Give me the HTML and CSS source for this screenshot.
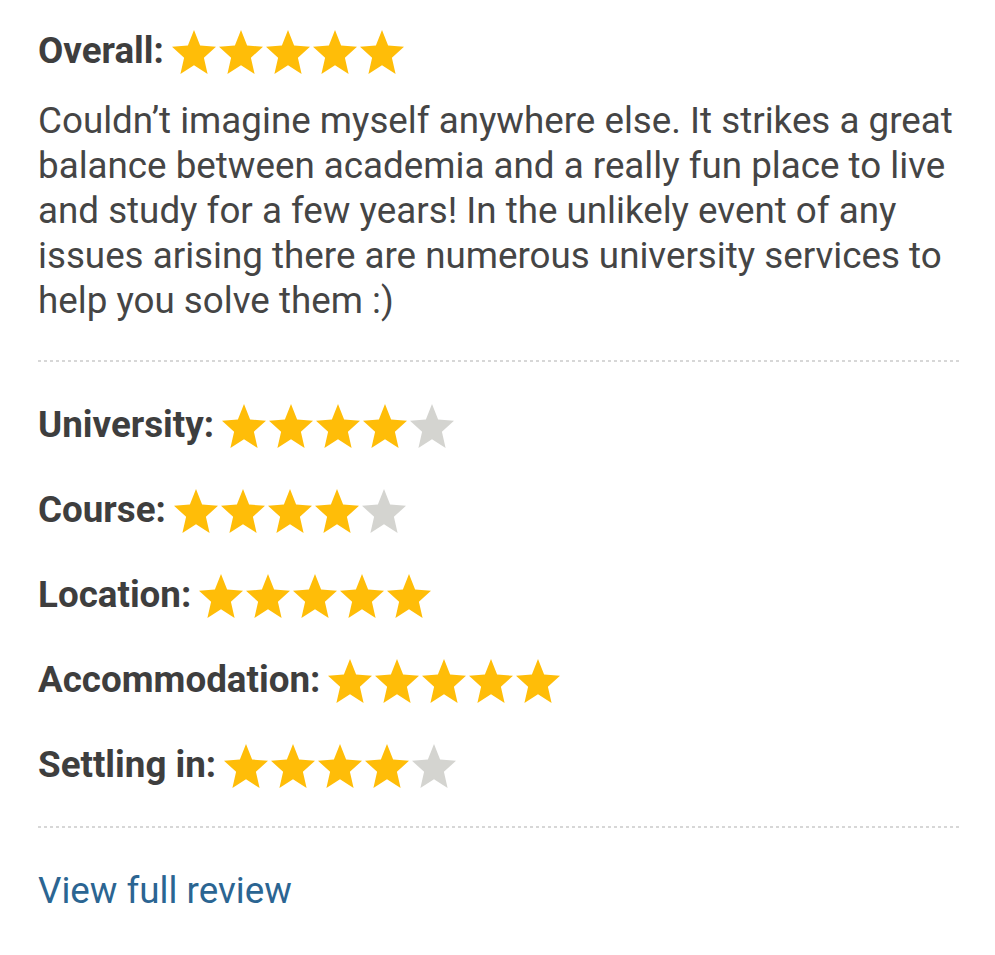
FILE: index.html
```html
<!DOCTYPE html>
<html lang="en">
<head>
<meta charset="utf-8">
<title>Review</title>
<link rel="stylesheet" href="styles.css">
</head>
<body>
<main class="review">
  <div class="rating-row overall">
    <span class="label">Overall:</span>
    <span class="stars">
      <svg class="star on" viewBox="2.45 0 95.1 90.45" preserveAspectRatio="none"><polygon points="50,0 63.23,31.8 97.55,34.55 71.4,56.95 79.39,90.45 50,72.5 20.61,90.45 28.6,56.95 2.45,34.55 36.77,31.8"/></svg><svg class="star on" viewBox="2.45 0 95.1 90.45" preserveAspectRatio="none"><polygon points="50,0 63.23,31.8 97.55,34.55 71.4,56.95 79.39,90.45 50,72.5 20.61,90.45 28.6,56.95 2.45,34.55 36.77,31.8"/></svg><svg class="star on" viewBox="2.45 0 95.1 90.45" preserveAspectRatio="none"><polygon points="50,0 63.23,31.8 97.55,34.55 71.4,56.95 79.39,90.45 50,72.5 20.61,90.45 28.6,56.95 2.45,34.55 36.77,31.8"/></svg><svg class="star on" viewBox="2.45 0 95.1 90.45" preserveAspectRatio="none"><polygon points="50,0 63.23,31.8 97.55,34.55 71.4,56.95 79.39,90.45 50,72.5 20.61,90.45 28.6,56.95 2.45,34.55 36.77,31.8"/></svg><svg class="star on" viewBox="2.45 0 95.1 90.45" preserveAspectRatio="none"><polygon points="50,0 63.23,31.8 97.55,34.55 71.4,56.95 79.39,90.45 50,72.5 20.61,90.45 28.6,56.95 2.45,34.55 36.77,31.8"/></svg>
    </span>
  </div>
  <p class="body-text">Couldn’t imagine myself anywhere else. It strikes a great balance between academia and a really fun place to live and study for a few years! In the unlikely event of any issues arising there are numerous university services to help you solve them :)</p>
  <div class="divider"></div>
  <div class="ratings">
    <div class="rating-row">
      <span class="label">University:</span>
      <span class="stars"><svg class="star on" viewBox="2.45 0 95.1 90.45" preserveAspectRatio="none"><polygon points="50,0 63.23,31.8 97.55,34.55 71.4,56.95 79.39,90.45 50,72.5 20.61,90.45 28.6,56.95 2.45,34.55 36.77,31.8"/></svg><svg class="star on" viewBox="2.45 0 95.1 90.45" preserveAspectRatio="none"><polygon points="50,0 63.23,31.8 97.55,34.55 71.4,56.95 79.39,90.45 50,72.5 20.61,90.45 28.6,56.95 2.45,34.55 36.77,31.8"/></svg><svg class="star on" viewBox="2.45 0 95.1 90.45" preserveAspectRatio="none"><polygon points="50,0 63.23,31.8 97.55,34.55 71.4,56.95 79.39,90.45 50,72.5 20.61,90.45 28.6,56.95 2.45,34.55 36.77,31.8"/></svg><svg class="star on" viewBox="2.45 0 95.1 90.45" preserveAspectRatio="none"><polygon points="50,0 63.23,31.8 97.55,34.55 71.4,56.95 79.39,90.45 50,72.5 20.61,90.45 28.6,56.95 2.45,34.55 36.77,31.8"/></svg><svg class="star off" viewBox="2.45 0 95.1 90.45" preserveAspectRatio="none"><polygon points="50,0 63.23,31.8 97.55,34.55 71.4,56.95 79.39,90.45 50,72.5 20.61,90.45 28.6,56.95 2.45,34.55 36.77,31.8"/></svg></span>
    </div>
    <div class="rating-row">
      <span class="label">Course:</span>
      <span class="stars"><svg class="star on" viewBox="2.45 0 95.1 90.45" preserveAspectRatio="none"><polygon points="50,0 63.23,31.8 97.55,34.55 71.4,56.95 79.39,90.45 50,72.5 20.61,90.45 28.6,56.95 2.45,34.55 36.77,31.8"/></svg><svg class="star on" viewBox="2.45 0 95.1 90.45" preserveAspectRatio="none"><polygon points="50,0 63.23,31.8 97.55,34.55 71.4,56.95 79.39,90.45 50,72.5 20.61,90.45 28.6,56.95 2.45,34.55 36.77,31.8"/></svg><svg class="star on" viewBox="2.45 0 95.1 90.45" preserveAspectRatio="none"><polygon points="50,0 63.23,31.8 97.55,34.55 71.4,56.95 79.39,90.45 50,72.5 20.61,90.45 28.6,56.95 2.45,34.55 36.77,31.8"/></svg><svg class="star on" viewBox="2.45 0 95.1 90.45" preserveAspectRatio="none"><polygon points="50,0 63.23,31.8 97.55,34.55 71.4,56.95 79.39,90.45 50,72.5 20.61,90.45 28.6,56.95 2.45,34.55 36.77,31.8"/></svg><svg class="star off" viewBox="2.45 0 95.1 90.45" preserveAspectRatio="none"><polygon points="50,0 63.23,31.8 97.55,34.55 71.4,56.95 79.39,90.45 50,72.5 20.61,90.45 28.6,56.95 2.45,34.55 36.77,31.8"/></svg></span>
    </div>
    <div class="rating-row">
      <span class="label">Location:</span>
      <span class="stars"><svg class="star on" viewBox="2.45 0 95.1 90.45" preserveAspectRatio="none"><polygon points="50,0 63.23,31.8 97.55,34.55 71.4,56.95 79.39,90.45 50,72.5 20.61,90.45 28.6,56.95 2.45,34.55 36.77,31.8"/></svg><svg class="star on" viewBox="2.45 0 95.1 90.45" preserveAspectRatio="none"><polygon points="50,0 63.23,31.8 97.55,34.55 71.4,56.95 79.39,90.45 50,72.5 20.61,90.45 28.6,56.95 2.45,34.55 36.77,31.8"/></svg><svg class="star on" viewBox="2.45 0 95.1 90.45" preserveAspectRatio="none"><polygon points="50,0 63.23,31.8 97.55,34.55 71.4,56.95 79.39,90.45 50,72.5 20.61,90.45 28.6,56.95 2.45,34.55 36.77,31.8"/></svg><svg class="star on" viewBox="2.45 0 95.1 90.45" preserveAspectRatio="none"><polygon points="50,0 63.23,31.8 97.55,34.55 71.4,56.95 79.39,90.45 50,72.5 20.61,90.45 28.6,56.95 2.45,34.55 36.77,31.8"/></svg><svg class="star on" viewBox="2.45 0 95.1 90.45" preserveAspectRatio="none"><polygon points="50,0 63.23,31.8 97.55,34.55 71.4,56.95 79.39,90.45 50,72.5 20.61,90.45 28.6,56.95 2.45,34.55 36.77,31.8"/></svg></span>
    </div>
    <div class="rating-row">
      <span class="label">Accommodation:</span>
      <span class="stars"><svg class="star on" viewBox="2.45 0 95.1 90.45" preserveAspectRatio="none"><polygon points="50,0 63.23,31.8 97.55,34.55 71.4,56.95 79.39,90.45 50,72.5 20.61,90.45 28.6,56.95 2.45,34.55 36.77,31.8"/></svg><svg class="star on" viewBox="2.45 0 95.1 90.45" preserveAspectRatio="none"><polygon points="50,0 63.23,31.8 97.55,34.55 71.4,56.95 79.39,90.45 50,72.5 20.61,90.45 28.6,56.95 2.45,34.55 36.77,31.8"/></svg><svg class="star on" viewBox="2.45 0 95.1 90.45" preserveAspectRatio="none"><polygon points="50,0 63.23,31.8 97.55,34.55 71.4,56.95 79.39,90.45 50,72.5 20.61,90.45 28.6,56.95 2.45,34.55 36.77,31.8"/></svg><svg class="star on" viewBox="2.45 0 95.1 90.45" preserveAspectRatio="none"><polygon points="50,0 63.23,31.8 97.55,34.55 71.4,56.95 79.39,90.45 50,72.5 20.61,90.45 28.6,56.95 2.45,34.55 36.77,31.8"/></svg><svg class="star on" viewBox="2.45 0 95.1 90.45" preserveAspectRatio="none"><polygon points="50,0 63.23,31.8 97.55,34.55 71.4,56.95 79.39,90.45 50,72.5 20.61,90.45 28.6,56.95 2.45,34.55 36.77,31.8"/></svg></span>
    </div>
    <div class="rating-row">
      <span class="label">Settling in:</span>
      <span class="stars"><svg class="star on" viewBox="2.45 0 95.1 90.45" preserveAspectRatio="none"><polygon points="50,0 63.23,31.8 97.55,34.55 71.4,56.95 79.39,90.45 50,72.5 20.61,90.45 28.6,56.95 2.45,34.55 36.77,31.8"/></svg><svg class="star on" viewBox="2.45 0 95.1 90.45" preserveAspectRatio="none"><polygon points="50,0 63.23,31.8 97.55,34.55 71.4,56.95 79.39,90.45 50,72.5 20.61,90.45 28.6,56.95 2.45,34.55 36.77,31.8"/></svg><svg class="star on" viewBox="2.45 0 95.1 90.45" preserveAspectRatio="none"><polygon points="50,0 63.23,31.8 97.55,34.55 71.4,56.95 79.39,90.45 50,72.5 20.61,90.45 28.6,56.95 2.45,34.55 36.77,31.8"/></svg><svg class="star on" viewBox="2.45 0 95.1 90.45" preserveAspectRatio="none"><polygon points="50,0 63.23,31.8 97.55,34.55 71.4,56.95 79.39,90.45 50,72.5 20.61,90.45 28.6,56.95 2.45,34.55 36.77,31.8"/></svg><svg class="star off" viewBox="2.45 0 95.1 90.45" preserveAspectRatio="none"><polygon points="50,0 63.23,31.8 97.55,34.55 71.4,56.95 79.39,90.45 50,72.5 20.61,90.45 28.6,56.95 2.45,34.55 36.77,31.8"/></svg></span>
    </div>
  </div>
  <div class="divider second"></div>
  <a class="full-link" href="#">View full review</a>
</main>
</body>
</html>
```

FILE: styles.css
```css
html, body {
  margin: 0;
  padding: 0;
  background: #ffffff;
}

body {
  font-family: Roboto, "Liberation Sans", Arial, sans-serif;
  color: #454545;
}

.review {
  width: 924px;
  padding: 28px 0 40px 38px;
  display: flex;
  flex-direction: column;
}

.rating-row {
  display: flex;
  align-items: center;
  height: 45px;
}

.label {
  font-size: 36.75px;
  line-height: 45px;
  font-weight: 700;
  color: #3e3e3e;
  margin-right: 8px;
}

.stars {
  display: flex;
  gap: 3px;
  margin-top: 3px;
}

.star {
  width: 44px;
  height: 44px;
  display: block;
}

.star.on { fill: #ffbd08; }
.star.off { fill: #d4d4d0; }

.body-text {
  margin: 25px 0 0 0;
  font-size: 36.75px;
  line-height: 45px;
  color: #454545;
}

.divider {
  height: 2px;
  margin-top: 37px;
  background: repeating-linear-gradient(90deg, #d7d7d7 0 3px, transparent 3px 6px);
}

.ratings {
  display: flex;
  flex-direction: column;
  gap: 40px;
  margin-top: 40px;
}

.divider.second {
  margin-top: 39px;
}

.full-link {
  margin-top: 40px;
  font-size: 36.75px;
  line-height: 45px;
  color: #2b6592;
  text-decoration: none;
  align-self: flex-start;
}
```
